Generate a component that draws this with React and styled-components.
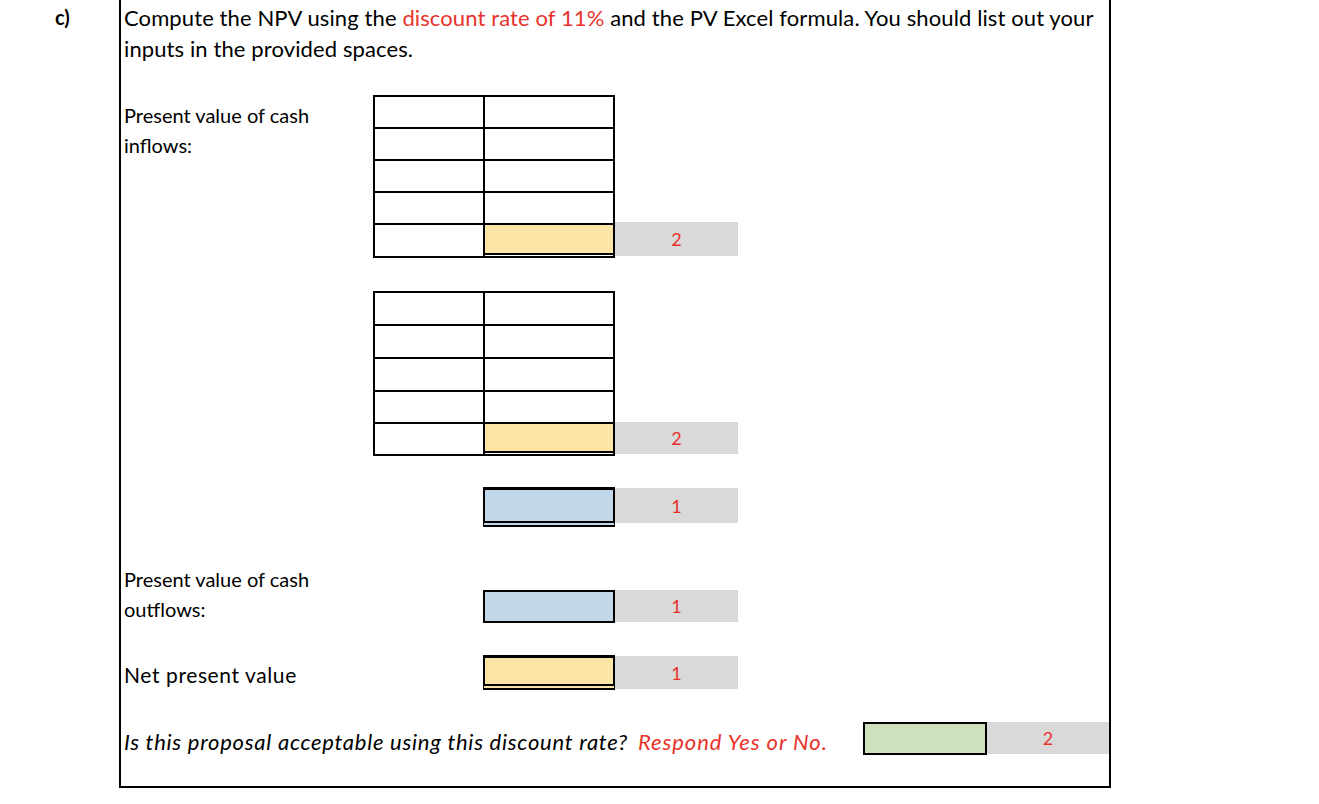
import React from "react";
import styled, { createGlobalStyle } from "styled-components";

const GlobalStyle = createGlobalStyle`
  html, body { margin: 0; padding: 0; background: #fff; }
  body { font-family: Lato, "Open Sans", sans-serif; color: #000; }
`;

const RED = "#e8322b";

const Page = styled.div`
  display: flex;
  width: 1319px;
  height: 804px;
  background: #fff;
`;

const Marker = styled.div`
  width: 119px;
  box-sizing: border-box;
  padding: 3px 0 0 55px;
  font-size: 20px;
  font-weight: 700;
  line-height: 28px;
`;

const Frame = styled.div`
  width: 992px;
  height: 788px;
  box-sizing: border-box;
  border-left: 2px solid #000;
  border-right: 2px solid #000;
  border-bottom: 2px solid #000;
  padding: 2px 0 0 3px;
  display: flex;
  flex-direction: column;
`;

const Heading = styled.div`
  font-size: 22px;
  letter-spacing: 0.11px;
  line-height: 31px;
  white-space: nowrap;
`;

const Red = styled.span`
  color: ${RED};
`;

const Row = styled.div`
  display: flex;
  margin-top: ${(p) => p.$mt}px;
`;

const Label = styled.div`
  width: 249px;
  flex: none;
  box-sizing: border-box;
  padding-top: ${(p) => p.$pt || 0}px;
  font-size: ${(p) => p.$size || 20}px;
  letter-spacing: ${(p) => p.$ls || 0}px;
  line-height: 30px;
  white-space: nowrap;
`;

const Table = styled.div`
  display: grid;
  grid-template-columns: 108px 128px;
  grid-template-rows: ${(p) => p.$rows};
  gap: 2px;
  background: #000;
  border: 2px solid #000;
  flex: none;
`;

const Cell = styled.div`
  background: ${(p) => (p.$fill ? "#fae5a4" : "#fff")};
  box-shadow: ${(p) =>
    p.$double ? "inset 0 -1px 0 #fff, inset 0 -3px 0 #000" : "none"};
`;

const Slot = styled.div`
  width: 242px;
  flex: none;
  display: flex;
  justify-content: flex-end;
`;

const TotalBox = styled.div`
  width: 132px;
  height: ${(p) => p.$h}px;
  box-sizing: border-box;
  margin-top: ${(p) => p.$mt || 0}px;
  background: ${(p) => p.$bg};
  border: 2px solid #000;
  border-top-width: ${(p) => (p.$total ? 3 : 2)}px;
  border-bottom: ${(p) => (p.$total ? "6px double #000" : "2px solid #000")};
`;

const Score = styled.div`
  width: ${(p) => p.$w || 123}px;
  height: ${(p) => p.$h}px;
  flex: none;
  align-self: ${(p) => (p.$end ? "flex-end" : "flex-start")};
  margin-top: ${(p) => p.$mt || 0}px;
  margin-bottom: ${(p) => p.$mb || 0}px;
  background: #d9d9d9;
  color: ${RED};
  font-size: 18px;
  display: flex;
  align-items: center;
  justify-content: center;
`;

const Question = styled.div`
  flex: 1;
  font-size: 22px;
  letter-spacing: 0.75px;
  font-style: italic;
  line-height: 33px;
  padding-top: 3px;
  white-space: nowrap;
`;

const Answer = styled.span`
  color: ${RED};
  margin-left: 10px;
  letter-spacing: 0.95px;
`;

const GreenBox = styled.div`
  width: 124px;
  height: 33px;
  box-sizing: border-box;
  flex: none;
  background: #cde1bc;
  border: 2px solid #000;
`;

const InputTable = ({ rows }) => (
  <Table $rows={rows}>
    {Array.from({ length: 4 }).map((_, i) => (
      <React.Fragment key={i}>
        <Cell />
        <Cell />
      </React.Fragment>
    ))}
    <Cell />
    <Cell $fill $double />
  </Table>
);

export default function App() {
  return (
    <Page>
      <GlobalStyle />
      <Marker>c)</Marker>
      <Frame>
        <Heading>
          Compute the NPV using the <Red>discount rate of 11%</Red> and the PV
          Excel formula. You should list out your
          <br />
          inputs in the provided spaces.
        </Heading>

        <Row $mt={31}>
          <Label $pt={5}>
            Present value of cash
            <br />
            inflows:
          </Label>
          <InputTable rows="30px 30px 30px 30px 31px" />
          <Score $h={34} $end $mb={2}>2</Score>
        </Row>

        <Row $mt={33}>
          <Label />
          <InputTable rows="31px 31px 31px 30px 30px" />
          <Score $h={32} $end $mb={2}>2</Score>
        </Row>

        <Row $mt={31}>
          <Label />
          <Slot>
            <TotalBox $total $h={40} $bg="#c3d7eb" />
          </Slot>
          <Score $h={35} $mt={1}>1</Score>
        </Row>

        <Row $mt={37}>
          <Label>
            Present value of cash
            <br />
            outflows:
          </Label>
          <Slot>
            <TotalBox $h={33} $mt={26} $bg="#c3d7eb" />
          </Slot>
          <Score $h={32} $mt={26}>1</Score>
        </Row>

        <Row $mt={31}>
          <Label $pt={5} $size={21} $ls={0.6}>
            Net present value
          </Label>
          <Slot>
            <TotalBox $total $h={35} $bg="#fae5a4" />
          </Slot>
          <Score $h={33} $mt={1}>1</Score>
        </Row>

        <Row $mt={32}>
          <Question>
            Is this proposal acceptable using this discount rate?
            <Answer>Respond Yes or No.</Answer>
          </Question>
          <GreenBox />
          <Score $h={32} $w={122}>2</Score>
        </Row>
      </Frame>
    </Page>
  );
}
